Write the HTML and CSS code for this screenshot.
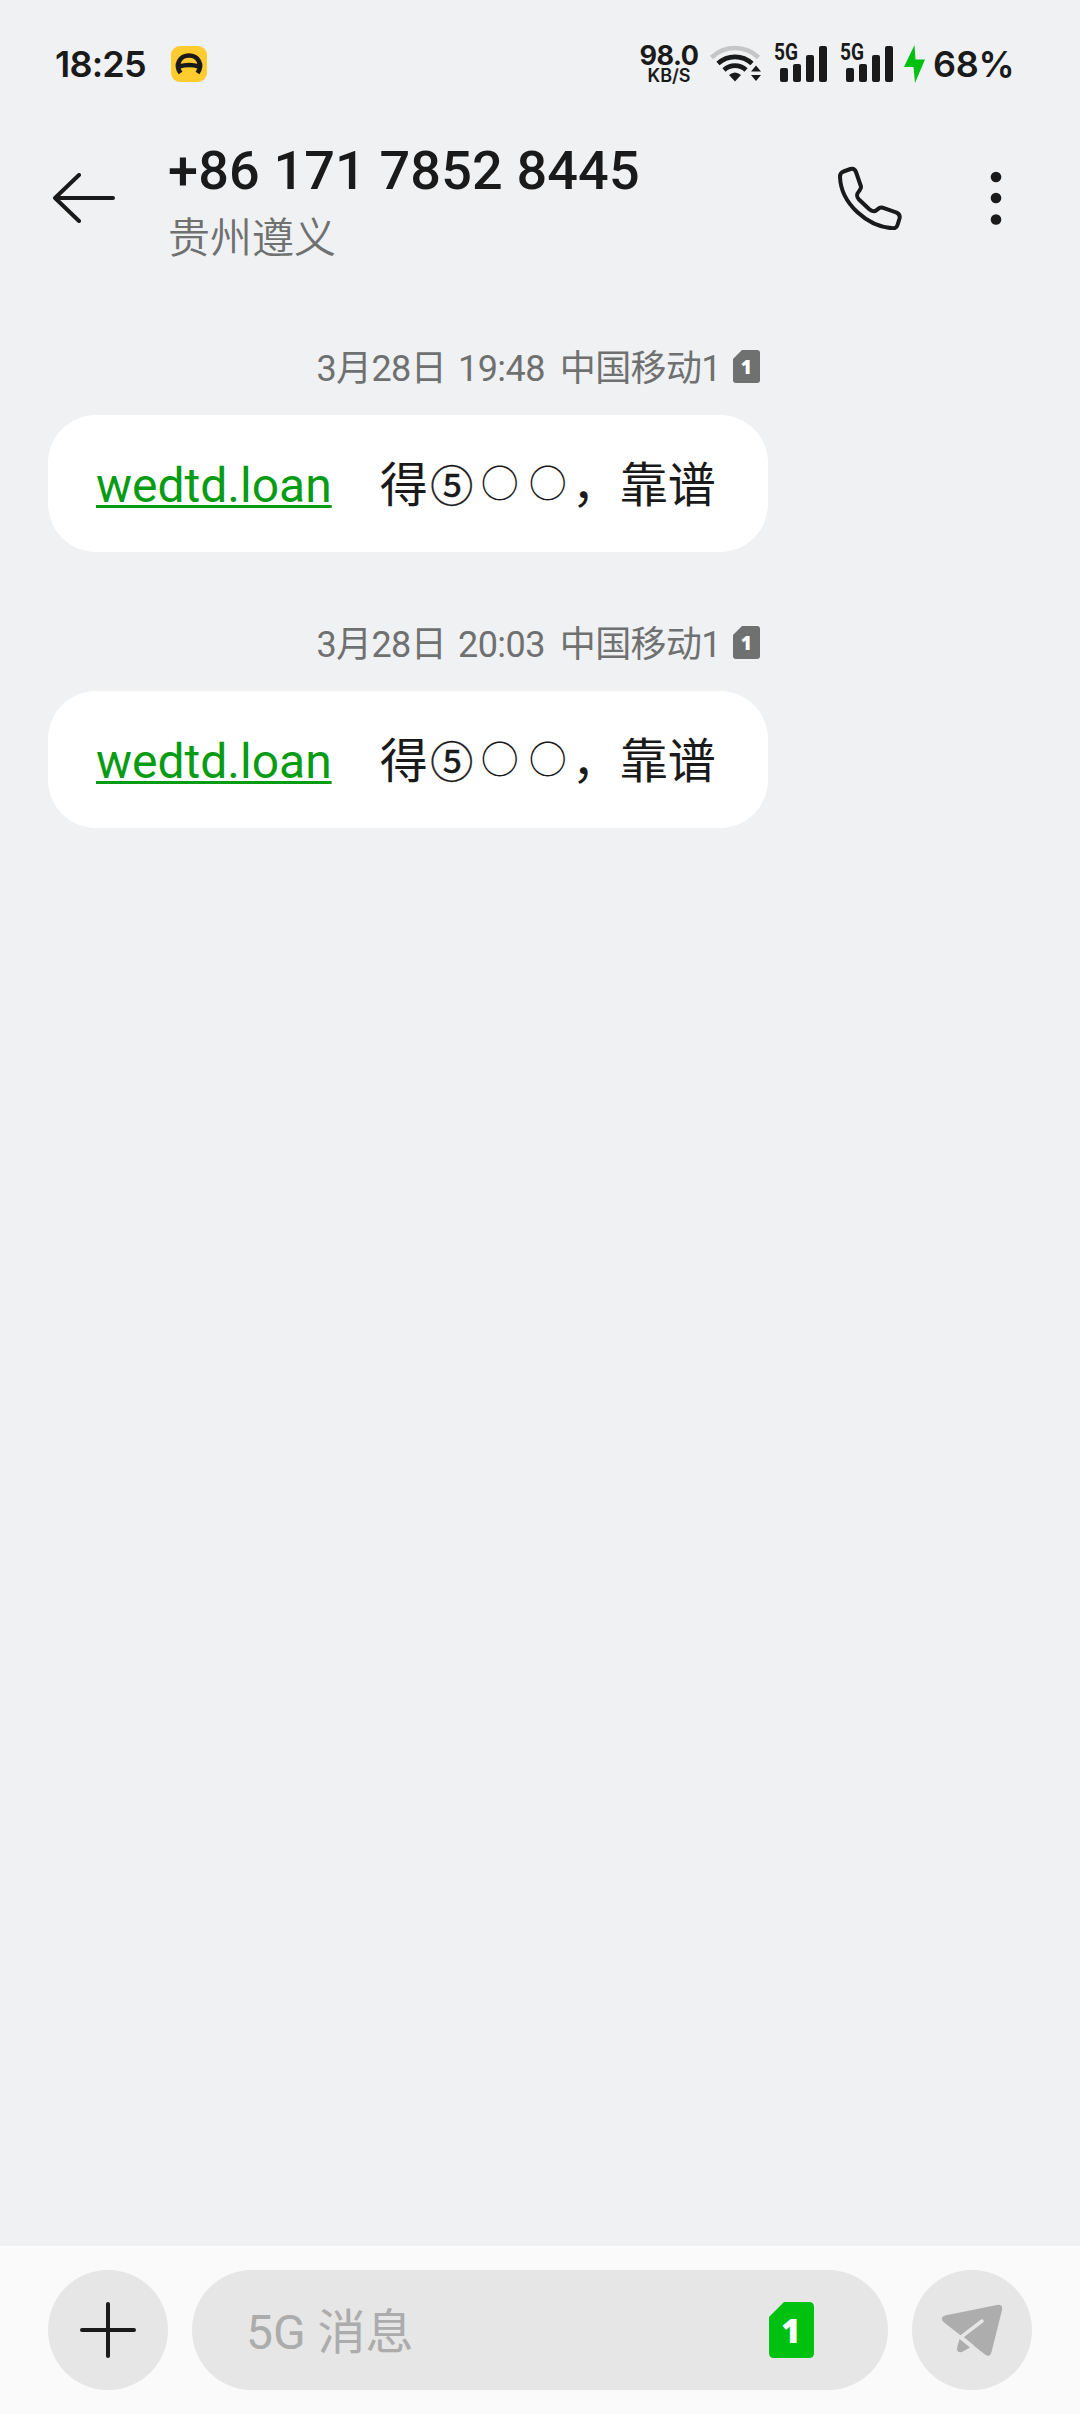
FILE: index.html
```html
<!DOCTYPE html>
<html lang="zh-CN">
<head>
    <meta charset="UTF-8">
    <meta name="viewport" content="width=device-width, initial-scale=1.0">
    <title>Messages</title>
    <link rel="stylesheet" href="styles.css">
</head>
<body>
    <!-- Status bar -->
    <div class="status-bar">
        <span class="time">18:25</span>
        <svg class="app-icon" width="36" height="36" viewBox="0 0 36 36">
            <rect width="36" height="36" rx="9" fill="#ffcb2f"/>
            <path d="M9.500 27C3.500 18.500 9 9.500 18 9.500s14.500 9 8.500 17.500M8 20.500q10-3 20 0" fill="none" stroke="#1a1a1a" stroke-width="4.600"/>
        </svg>
        <div class="net-speed">
            <span class="speed">98.0</span>
            <span class="unit">KB/S</span>
        </div>
        <svg class="wifi" width="52" height="38" viewBox="0 0 52 38" fill="none" stroke="#1a1a1a" stroke-width="4.600">
            <path d="M1.500 12.500a34 34 0 0 1 47 0" stroke="#c5c6c7"/>
            <path d="M8 18.500a25 25 0 0 1 34 0"/>
            <path d="M14 25a16 16 0 0 1 22 0"/>
            <path d="M19 30q6-5 12 0l-6 6.500z" fill="#1a1a1a" stroke="none"/>
            <path d="M41 26.500l5-6 5 6zM41 30h10l-5 6z" fill="#1a1a1a" stroke="none"/>
        </svg>
        <div class="signal">
            <span class="signal-type">5G</span>
            <i class="bar1"></i><i class="bar2"></i><i class="bar3"></i><i class="bar4"></i>
        </div>
        <div class="signal">
            <span class="signal-type">5G</span>
            <i class="bar1"></i><i class="bar2"></i><i class="bar3"></i><i class="bar4"></i>
        </div>
        <svg class="charging" width="22" height="38" viewBox="0 0 22 38">
            <path d="M10.500 0L0 22h9.500L11 38 21 14.500h-9.500z" fill="#00c010"/>
        </svg>
        <span class="battery">68%</span>
    </div>

    <!-- Contact -->
    <div class="header">
        <svg class="back" width="62" height="50" viewBox="0 0 62 50" fill="none" stroke="#1a1a1a" stroke-width="4" stroke-linecap="round" stroke-linejoin="round">
            <path d="M26 2L2 25l24 23M2 25h58"/>
        </svg>
        <div class="contact">
            <div class="number">+86 171 7852 8445</div>
            <div class="place">贵州遵义</div>
        </div>
        <svg class="call" width="64" height="64" viewBox="0 0 64 64" fill="none" stroke="#1a1a1a" stroke-width="4" stroke-linejoin="round">
            <path d="M5.500 5.500L12.500 3Q16.500 2 18 6L22.800 20Q23.500 22 21.500 24.500C18.500 28 18 30.500 21 33.500L31 43C34.500 46 37 46 40 43Q42 41 44.500 41.700L58 46.300Q62.500 48 61.500 52.500L59.500 59Q58.500 62.500 55 62.300C30 61 3 38 2 11Q1.800 7 5.500 5.500z"/>
        </svg>
        <svg class="more" width="12" height="54" viewBox="0 0 12 54" fill="#1a1a1a">
            <circle cx="6" cy="6" r="5.300"/>
            <circle cx="6" cy="27" r="5.300"/>
            <circle cx="6" cy="48.500" r="5.300"/>
        </svg>
    </div>

    <!-- Messages -->
    <div class="messages">
        <div class="message">
            <div class="meta">
                <span class="date">3月28日</span>
                <span class="clock">19:48</span>
                <span class="carrier">中国移动1</span>
                <svg width="27" height="33" viewBox="0 0 27 33">
                    <path d="M9 0h15q3 0 3 3v27q0 3-3 3H3q-3 0-3-3V9z" fill="#6f7070"/>
                    <text class="sim-number" x="13" y="24" font-size="19">1</text>
                </svg>
            </div>
            <div class="bubble"><a class="link">wedtd.loan</a>　得<span class="five">⑤</span><span class="ring">○</span><span class="ring">○</span>，靠谱</div>
        </div>
        <div class="message">
            <div class="meta">
                <span class="date">3月28日</span>
                <span class="clock">20:03</span>
                <span class="carrier">中国移动1</span>
                <svg width="27" height="33" viewBox="0 0 27 33">
                    <path d="M9 0h15q3 0 3 3v27q0 3-3 3H3q-3 0-3-3V9z" fill="#6f7070"/>
                    <text class="sim-number" x="13" y="24" font-size="19">1</text>
                </svg>
            </div>
            <div class="bubble"><a class="link">wedtd.loan</a>　得<span class="five">⑤</span><span class="ring">○</span><span class="ring">○</span>，靠谱</div>
        </div>
    </div>

    <!-- Input bar -->
    <div class="input-bar">
        <div class="round-button">
            <svg width="56" height="56" viewBox="0 0 56 56" stroke="#1a1a1a" stroke-width="4" stroke-linecap="round">
                <path d="M28 2v52M2 28h52"/>
            </svg>
        </div>
        <div class="input-box">
            <span class="placeholder">5G 消息</span>
            <svg width="45" height="56" viewBox="0 0 45 56">
                <path d="M15 0h25q5 0 5 5v46q0 5-5 5H5q-5 0-5-5V15z" fill="#00c010"/>
                <text class="sim-number" x="22" y="41" font-size="33">1</text>
            </svg>
        </div>
        <div class="round-button">
            <svg width="62" height="54" viewBox="0 0 62 54">
                <path d="M4 12.500L56 2q6-1 5 5L50.500 49q-1.500 6-6.500 2.500L2.500 19q-4-4.500 1.500-6.500z" fill="#adadad"/>
                <path d="M18.500 36L16 45q-.5 5 5 4l8-4.500z" fill="#adadad"/>
                <path d="M41 18L20 34l11 9" fill="none" stroke="#e6e6e6" stroke-width="3.500" stroke-linecap="round"/>
            </svg>
        </div>
    </div>
</body>
</html>
```
FILE: styles.css
```css
* {
    box-sizing: border-box;
}

body {
    font-family: Roboto, "Noto Sans CJK SC", sans-serif;
    background-color: #eff1f3;
    color: #1a1a1a;
    margin: 0;
    height: 2414px;
    display: flex;
    flex-direction: column;
}

svg {
    display: block;
    flex-shrink: 0;
}

/* Status bar */
.status-bar {
    display: flex;
    align-items: center;
    height: 128px;
    padding: 0 40px 0 55px;
    font-family: Inter, sans-serif;
    font-weight: 600;
}

.time, .battery {
    font-size: 36px;
    line-height: 40px;
}

.time {
    width: 116px;
    letter-spacing: -0.8px;
}

.net-speed {
    display: flex;
    flex-direction: column;
    align-items: center;
    width: 62px;
    margin-left: 431px;
    white-space: nowrap;
}

.speed {
    font-size: 27px;
    font-weight: 700;
    line-height: 22px;
    letter-spacing: -0.5px;
    margin-top: 1px;
}

.unit {
    font-size: 18px;
    line-height: 18px;
}

.wifi {
    margin-left: 10px;
}

.signal {
    position: relative;
    display: flex;
    align-items: flex-end;
    gap: 5px;
    width: 52px;
    height: 36px;
    margin-left: 14px;
    padding-left: 6px;
}

.wifi + .signal {
    margin-left: 12px;
}

.signal i {
    width: 8px;
    border-radius: 2px;
    background-color: #1a1a1a;
    flex-shrink: 0;
}

.signal .bar1 { height: 14px; }
.signal .bar2 { height: 18px; }
.signal .bar3 { height: 27px; }
.signal .bar4 { height: 36px; }

.signal-type {
    position: absolute;
    left: 0;
    top: -3px;
    font-family: Roboto, sans-serif;
    font-size: 23px;
    font-weight: 700;
    line-height: 20px;
    transform: scaleX(0.83);
    transform-origin: left;
}

.charging {
    margin-left: 12px;
}

.battery {
    margin-left: 7px;
    letter-spacing: -0.3px;
}

/* Header */
.header {
    display: flex;
    height: 188px;
    padding-left: 53px;
}

.back {
    margin-top: 45px;
}

.contact {
    width: 500px;
    margin-left: 53px;
}

.number {
    font-size: 54px;
    font-weight: 500;
    line-height: 64px;
    letter-spacing: 0.15px;
    margin-top: 11px;
    white-space: nowrap;
}

.place {
    font-size: 42px;
    font-weight: 350;
    line-height: 60px;
    margin-top: 6px;
    color: #6f7070;
}

.call {
    margin: 38px 0 0 170px;
}

.more {
    margin: 43px 0 0 88px;
}

/* Messages */
.messages {
    flex: 1;
    padding-left: 48px;
}

.message {
    width: 720px;
    height: 276px;
}

.meta {
    display: flex;
    justify-content: flex-end;
    height: 99px;
    padding: 34px 8px 0 0;
    font-size: 36px;
    line-height: 39px;
    letter-spacing: -0.6px;
    color: #6f7070;
    white-space: nowrap;
}

.clock {
    margin-left: 12px;
}

.carrier {
    margin: 0 12px 0 15px;
}

.sim-number {
    fill: #fff;
    font-family: "Open Sans", sans-serif;
    font-weight: 800;
    text-anchor: middle;
}

.bubble {
    height: 137px;
    padding: 0 48px;
    border-radius: 48px;
    background-color: #fff;
    font-size: 48px;
    line-height: 142px;
    white-space: nowrap;
}

.link {
    color: #089b14;
    text-decoration: underline;
    text-decoration-thickness: 3px;
    text-underline-offset: 3px;
    text-decoration-skip-ink: none;
}

.five, .ring {
    display: inline-block;
    width: 48px;
    font-family: "Noto Sans CJK SC", sans-serif;
    line-height: 1;
    text-align: center;
}

.five {
    font-size: 43px;
    font-weight: 400;
    -webkit-text-stroke: 0.4px #1a1a1a;
}

.ring {
    font-size: 38px;
    vertical-align: 5px;
}

/* Input bar */
.input-bar {
    display: flex;
    gap: 24px;
    height: 168px;
    padding: 24px 48px;
    background-color: #fafafa;
}

.round-button {
    display: flex;
    align-items: center;
    justify-content: center;
    width: 120px;
    height: 120px;
    border-radius: 50%;
    background-color: #e6e6e6;
}

.input-box {
    display: flex;
    flex: 1;
    align-items: center;
    justify-content: space-between;
    height: 120px;
    padding: 0 74px 0 54px;
    border-radius: 60px;
    background-color: #e6e6e6;
}

.placeholder {
    font-size: 48px;
    color: #acacac;
    padding-bottom: 4px;
}
```
